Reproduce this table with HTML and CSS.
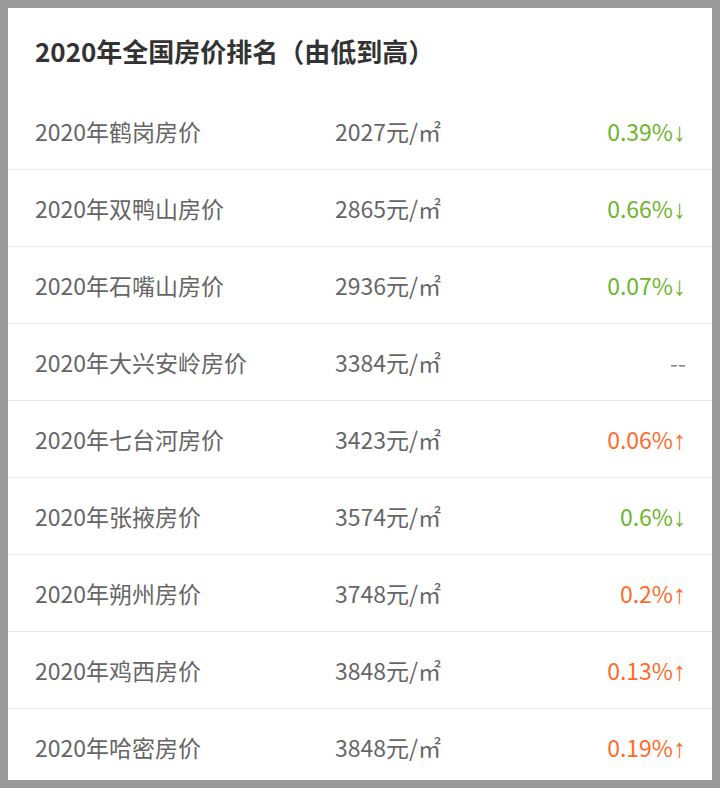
FILE: index.html
```html
<!DOCTYPE html>
<html lang="zh-CN">
<head>
<meta charset="utf-8">
<link rel="stylesheet" href="styles.css">
</head>
<body>
<div class="card">
  <h1 class="title">2020年全国房价排名（由低到高）</h1>
  <ul class="list">
    <li class="row"><span class="city">2020年鹤岗房价</span><span class="price">2027元/㎡</span><span class="chg down">0.39%<span class="arr">↓</span></span></li>
    <li class="row"><span class="city">2020年双鸭山房价</span><span class="price">2865元/㎡</span><span class="chg down">0.66%<span class="arr">↓</span></span></li>
    <li class="row"><span class="city">2020年石嘴山房价</span><span class="price">2936元/㎡</span><span class="chg down">0.07%<span class="arr">↓</span></span></li>
    <li class="row"><span class="city">2020年大兴安岭房价</span><span class="price">3384元/㎡</span><span class="chg none">--</span></li>
    <li class="row"><span class="city">2020年七台河房价</span><span class="price">3423元/㎡</span><span class="chg up">0.06%<span class="arr">↑</span></span></li>
    <li class="row"><span class="city">2020年张掖房价</span><span class="price">3574元/㎡</span><span class="chg down">0.6%<span class="arr">↓</span></span></li>
    <li class="row"><span class="city">2020年朔州房价</span><span class="price">3748元/㎡</span><span class="chg up">0.2%<span class="arr">↑</span></span></li>
    <li class="row"><span class="city">2020年鸡西房价</span><span class="price">3848元/㎡</span><span class="chg up">0.13%<span class="arr">↑</span></span></li>
    <li class="row"><span class="city">2020年哈密房价</span><span class="price">3848元/㎡</span><span class="chg up">0.19%<span class="arr">↑</span></span></li>
  </ul>
</div>
</body>
</html>
```
FILE: styles.css
```css
html, body {
  margin: 0;
  padding: 0;
}
body {
  background: #999999;
  padding: 8px;
  height: 788px;
  box-sizing: border-box;
  font-family: "Noto Sans CJK SC", "Noto Sans", sans-serif;
}
.card {
  background: #ffffff;
  height: 772px;
  overflow: hidden;
}
.title {
  margin: 0;
  height: 84px;
  display: flex;
  align-items: center;
  padding-left: 27px;
  font-size: 26px;
  font-weight: 700;
  color: #333333;
}
.list {
  list-style: none;
  margin: 0;
  padding: 0;
}
.row {
  height: 76px;
  border-bottom: 1px solid #e8e8e8;
  display: grid;
  grid-template-columns: 300px 1fr auto;
  align-items: center;
  padding: 0 26px 0 27px;
  font-size: 23px;
  color: #666666;
}
.row:first-child {
  margin-top: 1px;
}
.chg {
  text-align: right;
}
.down { color: #6cb52d; }
.up { color: #ff6a2a; }
.none { color: #888888; }
.arr {
  font-family: "Liberation Sans", sans-serif;
  font-size: 26px;
  line-height: 1;
}
```
